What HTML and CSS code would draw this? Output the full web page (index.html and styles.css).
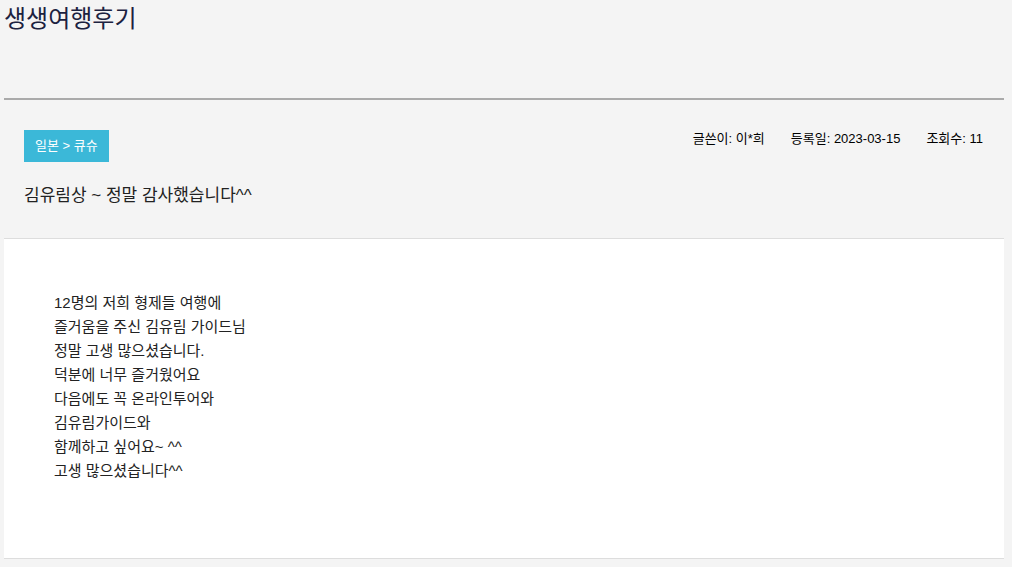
FILE: index.html
```html
<!DOCTYPE html>
<html lang="ko">
<head>
    <meta charset="UTF-8">
    <meta name="viewport" content="width=device-width, initial-scale=1.0">
    <title>생생여행후기</title>
    <link rel="stylesheet" href="styles.css">
</head>
<body>
    <div id="reviewPage">
        <!-- Page Title -->
        <div class="pageHeader">
            <h1>생생여행후기</h1>
        </div>

        <!-- Review Info -->
        <div class="reviewHead">
            <div class="headTop">
                <span class="badge">일본 &gt; 큐슈</span>
                <ul class="meta">
                    <li>글쓴이: 이*희</li>
                    <li>등록일: 2023-03-15</li>
                    <li>조회수: 11</li>
                </ul>
            </div>
            <h2 class="reviewTitle">김유림상 ~ 정말 감사했습니다^^</h2>
        </div>

        <!-- Review Body -->
        <div class="reviewBody">
            <p>12명의 저희 형제들 여행에<br>
            즐거움을 주신 김유림 가이드님<br>
            정말 고생 많으셨습니다.<br>
            덕분에 너무 즐거웠어요<br>
            다음에도 꼭 온라인투어와<br>
            김유림가이드와<br>
            함께하고 싶어요~ ^^<br>
            고생 많으셨습니다^^</p>
        </div>
    </div>
</body>
</html>
```

FILE: styles.css
```css
/* Basic Styles */
body {
    font-family: "Liberation Sans", "Noto Sans CJK KR", sans-serif;
    background-color: #f4f4f4;
    color: #222;
    margin: 0;
    padding: 0;
}

#reviewPage {
    padding: 0 8px 0 4px;
}

/* Page Title */
.pageHeader {
    height: 98px;
    border-bottom: 2px solid #aaa;
}

.pageHeader h1 {
    margin: 0;
    padding-top: 3px;
    font-size: 24px;
    font-weight: normal;
    line-height: 32px;
    color: #1c2240;
}

/* Review Info */
.reviewHead {
    padding: 30px 20px 0;
    height: 108px;
    border-bottom: 1px solid #ddd;
}

.headTop {
    display: flex;
    justify-content: space-between;
    align-items: flex-start;
}

.badge {
    display: inline-block;
    background-color: #3bb8d8;
    color: #fff;
    font-size: 13px;
    line-height: 32px;
    padding: 0 11px;
}

.meta {
    list-style: none;
    margin: 0;
    padding: 2px 1px 0 0;
    display: flex;
    gap: 26px;
    font-size: 13px;
    line-height: 14px;
    color: #000;
}

.reviewTitle {
    margin: 22px 0 0;
    font-size: 17px;
    font-weight: normal;
    line-height: 24px;
    color: #222;
}

/* Review Body */
.reviewBody {
    background-color: #fff;
    border-bottom: 1px solid #ddd;
    padding: 52px 50px 75px;
}

.reviewBody p {
    margin: 0;
    font-size: 15px;
    line-height: 24px;
    color: #222;
}
```
